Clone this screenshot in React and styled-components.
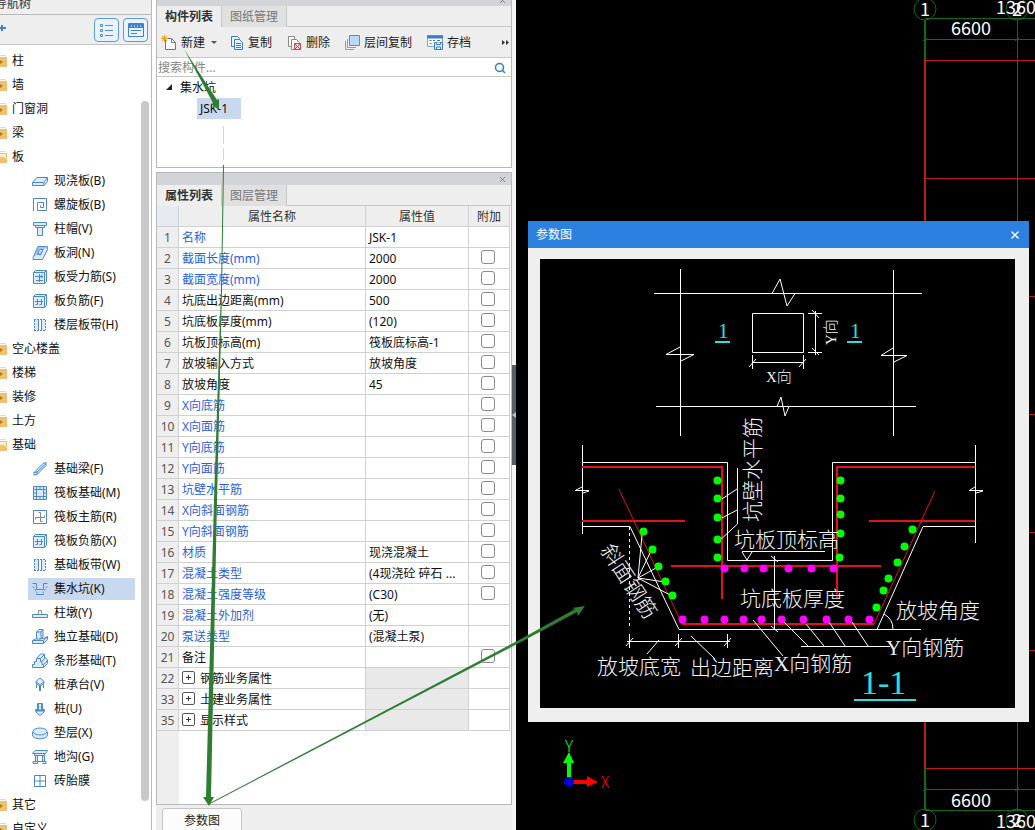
import React from 'react'
import styled, {createGlobalStyle} from 'styled-components'
import {Search, X} from 'lucide-react'

const GlobalStyle = createGlobalStyle`
  * {
    box-sizing: border-box;
  }

  body {
    margin: 0;
    overflow: hidden;
    background: #fff;
    color: #111;
    font-family: 'Noto Sans', 'Noto Sans CJK SC', sans-serif;
    font-size: 12px;
    line-height: 16px;
  }

  button,
  input {
    font: inherit;
    color: inherit;
    margin: 0;
    padding: 0;
    border: 0;
    background: none;
  }
`

const treeIcons = {
  slab: (
    <>
      <path d="M.5 9.500 5 4.500h10.500l-3.500 5zM.5 9.500v3H12v-3M12 12.500l3.500-4v-4" />
    </>
  ),
  spiral: (
    <>
      <path className="bare" d="M1.500 14V1.500h13v12h-9v-8h6v5h-3v-2" />
    </>
  ),
  cap: (
    <>
      <path d="M1.500 1.500h13v3h-13zM3.500 4.500h9v2h-9zM5.500 6.500h5v8h-5z" />
    </>
  ),
  hole: (
    <>
      <path className="deep" d="M6 1.500h9L10 12.500H1z" />
      <path d="M7.500 4.500h3.500l-2 5H5.500zM1 12.500v2h9.500l5-10v-3" />
    </>
  ),
  rebar: (
    <>
      <path d="M1.500 3.500h11v11h-11zM1.500 3.500l2-2h11v11l-2 2M12.500 3.500l2-2" />
      <path d="M3 7.500h7M4 11.500h7M7.500 5v8M9 6l2 1.500L9 9" />
    </>
  ),
  negative: (
    <>
      <path d="M1.500 3.500h11v11h-11zM1.500 3.500l2-2h11v11l-2 2M12.500 3.500l2-2" />
      <path className="bare" d="M5.500 6v5.500h-2M9.500 6v5.500h-2M3 8.500h8" />
    </>
  ),
  strip: (
    <>
      <path className="pale" d="M2 3h4v10H2zM10 3h4v10h-4z" />
      <path d="M6.500 3v10M9.500 3v10" />
      <path className="bare" strokeDasharray="2 1" d="M2 2.500h12M2 13.500h12M2.500 3v10M13.500 3v10" />
    </>
  ),
  beam: (
    <>
      <path d="M2 11.500 11 2.500l3-1v3L5 13.500l-3 .5zM2 11.500l3-.5v2.500M5 11l9-8.500" />
    </>
  ),
  raft: (
    <>
      <path d="M1.500 1.500h13v13h-13zM4.500 4.500h7v7h-7z" />
      <path d="M1.500 4.500h13M1.500 11.500h13M4.500 1.500v13M11.500 1.500v13M8 1.500v3M8 11.500v3M1.500 8h3M11.500 8h3" />
    </>
  ),
  mainbar: (
    <>
      <path className="bare" d="M1.500 1.500h13v13h-13z" />
      <path className="grey" d="M8.500 3.500v9M3.500 8.500h9M8.500 3.500h-2M8.500 12.500h2M3.500 8.500v2M12.500 8.500v-2" />
    </>
  ),
  pit: (
    <>
      <path className="bare" d="M.5 2.500h4v6h7v-6h4" />
      <path className="bare" strokeDasharray="2 1" d="M1 5.500l5 8h4l5-8" />
      <path className="bare" d="M4 13.500h8" />
    </>
  ),
  pier: (
    <>
      <path d="M.5 9.500h15v3H.5z" />
      <path className="grey" d="M5.500 9.500l1-2v-2h3v2l1 2" />
    </>
  ),
  footing: (
    <>
      <path d="M.5 11.500l4-2h7l4-2v3l-4 4H.5zM.5 11.500h11v3M11.500 11.500l4-4" />
      <path d="M4.500 3 7 .5h4V8L9 10H4.500zM4.500 3H9v7M9 3l2-2.500" />
    </>
  ),
  stepfoot: (
    <>
      <path d="M.5 14.500v-3h2v-3h2v-3L8.500 1h4v3.500h1L15.500 7v3.500l-4 4z" />
      <path className="bare" d="M4.500 5.500h4v3h1.500v3h1.500v3M8.500 5.500l4-4M10 8.500l3-4M11.500 11.500l4-4" />
    </>
  ),
  pilecap: (
    <>
      <path d="m8 1 4 3.500v2L8 9 4 6.500v-2zM4 4.500l4 3 4-3" />
      <path d="M4.500 7v4M11.500 7v4M7.500 8.500V14M8.500 8.500V14" />
    </>
  ),
  pile: (
    <>
      <path d="M5.500 2.500h5v6h2v2L8 14.500l-4.500-4v-2h2z" />
      <path className="bare" d="M6 3v7M10 3v7M4 9.500h8" strokeWidth="2" />
    </>
  ),
  cushion: (
    <>
      <path d="M.5 7v3c0 5 15 5 15 0V7" />
      <ellipse cx="8" cy="6.500" rx="7" ry="3.500" />
    </>
  ),
  trench: (
    <>
      <path d="M.5 4.500 3 1.500h12.500l-2 3zM2.500 4.500h10v2h-10zM3.500 6.500v6h2v-6M10.500 6.500v6h2v-6M1 12.500h4.500v2H1zM10.500 12.500H14v2h-3.500M5.500 12.500h5" />
    </>
  ),
  brick: (
    <>
      <path className="bare" d="M2.500 2.500h11v11h-11zM2.500 8h11M8 2.500v11" />
    </>
  ),
}

const navTree = [
  {name: '柱'},
  {name: '墙'},
  {name: '门窗洞'},
  {name: '梁'},
  {
    name: '板',
    children: [
      ['slab', '现浇板(B)'],
      ['spiral', '螺旋板(B)'],
      ['cap', '柱帽(V)'],
      ['hole', '板洞(N)'],
      ['rebar', '板受力筋(S)'],
      ['negative', '板负筋(F)'],
      ['strip', '楼层板带(H)'],
    ],
  },
  {name: '空心楼盖'},
  {name: '楼梯'},
  {name: '装修'},
  {name: '土方'},
  {
    name: '基础',
    children: [
      ['beam', '基础梁(F)'],
      ['raft', '筏板基础(M)'],
      ['mainbar', '筏板主筋(R)'],
      ['negative', '筏板负筋(X)'],
      ['strip', '基础板带(W)'],
      ['pit', '集水坑(K)'],
      ['pier', '柱墩(Y)'],
      ['footing', '独立基础(D)'],
      ['stepfoot', '条形基础(T)'],
      ['pilecap', '桩承台(V)'],
      ['pile', '桩(U)'],
      ['cushion', '垫层(X)'],
      ['trench', '地沟(G)'],
      ['brick', '砖胎膜'],
    ],
  },
  {name: '其它'},
  {name: '自定义'},
]

const properties = [
  {no: 1, name: '名称', value: 'JSK-1', link: true},
  {no: 2, name: '截面长度(mm)', value: '2000', link: true, check: true},
  {no: 3, name: '截面宽度(mm)', value: '2000', link: true, check: true},
  {no: 4, name: '坑底出边距离(mm)', value: '500', check: true},
  {no: 5, name: '坑底板厚度(mm)', value: '(120)', check: true},
  {no: 6, name: '坑板顶标高(m)', value: '筏板底标高-1', check: true},
  {no: 7, name: '放坡输入方式', value: '放坡角度', check: true},
  {no: 8, name: '放坡角度', value: '45', check: true},
  {no: 9, name: 'X向底筋', link: true, check: true},
  {no: 10, name: 'X向面筋', link: true, check: true},
  {no: 11, name: 'Y向底筋', link: true, check: true},
  {no: 12, name: 'Y向面筋', link: true, check: true},
  {no: 13, name: '坑壁水平筋', link: true, check: true},
  {no: 14, name: 'X向斜面钢筋', link: true, check: true},
  {no: 15, name: 'Y向斜面钢筋', link: true, check: true},
  {no: 16, name: '材质', value: '现浇混凝土', link: true, check: true},
  {no: 17, name: '混凝土类型', value: '(4现浇砼 碎石 ...', link: true, check: true},
  {no: 18, name: '混凝土强度等级', value: '(C30)', link: true, check: true},
  {no: 19, name: '混凝土外加剂', value: '(无)', link: true},
  {no: 20, name: '泵送类型', value: '(混凝土泵)', link: true},
  {no: 21, name: '备注', check: true},
  {no: 22, name: '钢筋业务属性', group: true},
  {no: 33, name: '土建业务属性', group: true},
  {no: 35, name: '显示样式', group: true},
]

function FolderIcon({open}) {
  return (
    <svg width="7" height="12" viewBox="0 0 7 12">
      <path d="M0 0h6v1H0z" fill="#f5d9a4" />
      <path d="M0 2h7v10H0z" fill="#efc070" />
      {open ? (
        <path d="M0 3h6v5L4 6H0z" fill="#fdf0cf" />
      ) : (
        <path d="M0 5l3 2-3 2z" fill="#b9781f" />
      )}
    </svg>
  )
}

function Sidebar() {
  return (
    <SidebarStyles>
      <h2>导航树</h2>
      <div className="tools">
        <button className="add" aria-label="添加">
          <svg width="6" height="8" viewBox="0 0 6 8">
            <path d="M0 4h6M2 1v6" stroke="#3f83cc" strokeWidth="2" />
          </svg>
        </button>
        <ViewButton aria-label="列表视图">
          <svg width="14" height="14" viewBox="0 0 14 14" fill="none" stroke="#4a8fd8">
            <path d="M5 2.500h8M5 7.500h8M5 12.500h8" />
            <path d="M.5 1.500h2v2h-2zM.5 6.500h2v2h-2zM.5 11.500h2v2h-2z" />
          </svg>
        </ViewButton>
        <ViewButton aria-label="图标视图">
          <svg width="16" height="14" viewBox="0 0 16 14" fill="none" stroke="#3f83cc">
            <path d="M.5.500h15v13H.5z" />
            <path d="M1 3h14" strokeWidth="4" />
            <path d="M3 3h1M6 3h1M9 3h1M12 3h1" stroke="#fff" />
            <path d="M3 7.500h10M3 10.500h6" />
          </svg>
        </ViewButton>
      </div>
      <div className="body">
        <nav>
          {navTree.map(group => (
            <React.Fragment key={group.name}>
              <GroupRow>
                <FolderIcon open={Boolean(group.children)} />
                {group.name}
              </GroupRow>
              {group.children &&
                group.children.map(([icon, label]) => (
                  <LeafRow key={label} $active={label === '集水坑(K)'}>
                    <svg width="16" height="16" viewBox="0 0 16 16">
                      {treeIcons[icon]}
                    </svg>
                    {label}
                  </LeafRow>
                ))}
            </React.Fragment>
          ))}
        </nav>
        <div className="scrollbar" />
      </div>
    </SidebarStyles>
  )
}

function ComponentPanel() {
  return (
    <Panel $height="175px">
      <PanelBar>
        <button aria-label="关闭构件列表">
          <X size={9} />
        </button>
      </PanelBar>
      <Tabs>
        <Tab $active>构件列表</Tab>
        <Tab>图纸管理</Tab>
      </Tabs>
      <Toolbar>
        <ToolButton>
          <svg width="16" height="16" viewBox="0 0 16 16" fill="none">
            <path d="M4.500 3.500h6l4 4v7h-10z" fill="#fff" stroke="#777" />
            <path d="M10.500 3.500v4h4" stroke="#777" />
            <path d="M3.500 0v7M0 3.500h7M1 1l5 5M6 1 1 6" stroke="#f0a030" />
          </svg>
          新建
          <svg className="caret" width="6" height="4" viewBox="0 0 6 4">
            <path d="M0 0h6L3 3z" fill="#555" />
          </svg>
        </ToolButton>
        <ToolButton>
          <svg width="14" height="16" viewBox="0 0 14 16" fill="#e8f2fd" stroke="#3b7cc4">
            <path d="M1.500 1.500h6l2 2v8h-8z" />
            <path d="M4.500 4.500h5l3 3v7h-8z" />
            <path d="M6 8.500h5M6 10.500h5M6 12.500h5" />
          </svg>
          复制
        </ToolButton>
        <ToolButton>
          <svg width="15" height="16" viewBox="0 0 15 16" fill="#fff" stroke="#888">
            <path d="M1.500 1.500h6v10h-6z" />
            <path d="M4.500 4.500h5l3 3v7h-8z" />
            <path d="M7.500 8.500h6v6h-6z" fill="#fbdcdc" stroke="#d04545" />
            <path d="m8 9 5 5M13 9l-5 5" stroke="#d04545" />
          </svg>
          删除
        </ToolButton>
        <ToolButton>
          <svg width="15" height="16" viewBox="0 0 15 16" fill="none">
            <path d="M.5 6v8.500H9" stroke="#e08a35" />
            <path d="M2.500 4v8.500H11" stroke="#e08a35" />
            <path d="M4.500.500h10v10h-10z" fill="#b9d9fb" stroke="#4a8fe0" />
          </svg>
          层间复制
        </ToolButton>
        <ToolButton>
          <svg width="16" height="16" viewBox="0 0 16 16" fill="#fff" stroke="#3b7cc4">
            <path d="M.5.500h15v11H.5z" stroke="#7fa8d4" />
            <path d="M0 2h16" strokeWidth="3" />
            <path d="M2.500 5.500h2M6 5.500h2M10 5.500h3M2.500 8.500h2" />
            <path d="M7.500 7.500h8v7h-8z" fill="#d8e8fb" />
            <path d="M9.500 7.500v2h4v-2M9.500 14v-2h4v2" />
          </svg>
          存档
        </ToolButton>
        <button className="more" aria-label="更多">
          <svg width="8" height="5" viewBox="0 0 8 5">
            <path d="M0 0l3 2.500L0 5zM4 0l3 2.500L4 5z" fill="#333" />
          </svg>
        </button>
      </Toolbar>
      <SearchBox>
        <input aria-label="搜索构件" placeholder="搜索构件..." />
        <Search size={12} color="#2c7fb8" strokeWidth={3} />
      </SearchBox>
      <ComponentTree>
        <li>
          <svg width="7" height="7" viewBox="0 0 7 7">
            <path d="M6 0v6H0z" fill="#222" />
          </svg>
          集水坑
        </li>
        <li className="selected">JSK-1</li>
      </ComponentTree>
    </Panel>
  )
}

function PropertyPanel() {
  return (
    <Panel $grow>
      <PanelBar>
        <button aria-label="关闭属性列表">
          <X size={9} />
        </button>
      </PanelBar>
      <Tabs>
        <Tab $active>属性列表</Tab>
        <Tab>图层管理</Tab>
      </Tabs>
      <div className="sheet">
        <PropertyTable>
          <colgroup>
            <col style={{width: 22}} />
            <col />
            <col style={{width: 103}} />
            <col style={{width: 41}} />
          </colgroup>
          <thead>
            <tr>
              <th />
              <th>属性名称</th>
              <th>属性值</th>
              <th>附加</th>
            </tr>
          </thead>
          <tbody>
            {properties.map(row => (
              <tr key={row.no}>
                <td className="no">{row.no}</td>
                <NameCell $link={row.link}>
                  {row.group && <button aria-label={`展开${row.name}`} />}
                  {row.name}
                </NameCell>
                <ValueCell $disabled={row.group}>{row.value}</ValueCell>
                <td className="extra">
                  {row.check && <input type="checkbox" aria-label={row.name} />}
                </td>
              </tr>
            ))}
          </tbody>
        </PropertyTable>
      </div>
    </Panel>
  )
}

function AxisGrid() {
  const rows = [60, 178, 296, 414, 532, 650, 768]
  return (
    <svg className="grid" width="100%" height="100%">
      <g transform="translate(-516 0)" fill="none">
        <g stroke="#c01818">
          {rows.map(y => (
            <path key={y} d={`M925 ${y + 0.5}H2400`} />
          ))}
          <path d="M925 60V768" strokeWidth="2" />
          <path d="M1017.500 60V768" />
        </g>
        <g stroke="#0f6b16">
          <path d="M925 18.500H2400M925 39.500H2400M925 789.500H2400M925 810.500H2400" />
          <path d="M925 20V60M925 768V810" strokeWidth="2" />
          <path d="M1017.500 20V60M1017.500 768V810" />
          <path d="M923 41l4-3M1015 41l4-3M923 791l4-3M1015 791l4-3" />
          <circle cx="925" cy="9" r="11" />
          <circle cx="1017" cy="9" r="11" />
          <circle cx="925" cy="820" r="11" />
          <circle cx="1017" cy="820" r="11" />
        </g>
        <g className="axis-text">
          <text x="925" y="16">1</text>
          <text x="1017" y="16">2</text>
          <text x="971" y="35">6600</text>
          <text x="1021" y="14">13600</text>
          <text x="971" y="807">6600</text>
          <text x="925" y="827">1</text>
          <text x="1017" y="827">2</text>
          <text x="1021" y="828">13600</text>
        </g>
        <path d="M567 781v-18h-4l6-11 5 11h-3v18z" fill="#00ff00" />
        <path d="M572 780h15v-4l11 6-11 5v-3h-15z" fill="#ff0000" />
        <circle cx="569" cy="782" r="5" fill="#0000d0" />
        <g className="ucs-text">
          <text x="569" y="752" fill="#00ff00">Y</text>
          <text x="605" y="788" fill="#ff0000">X</text>
        </g>
      </g>
    </svg>
  )
}

const greenBars = [
  [717, 480], [717, 498], [717, 517], [717, 539], [717, 557],
  [840, 480], [840, 498], [840, 514], [840, 533], [839, 557],
  [643, 531], [652, 549], [658, 566], [665, 581], [672, 595],
  [912, 529], [904, 546], [897, 562], [888, 578], [883, 590], [876, 607],
]

const pinkBars = [
  [724, 568], [744, 568], [763, 568], [788, 568], [811, 568], [833, 568],
  [682, 619], [704, 619], [724, 619], [743, 619], [761, 619],
  [781, 619], [803, 619], [826, 619], [848, 619], [869, 619],
]

function PitDrawing() {
  return (
    <DrawingStyles viewBox="540 259 475 449">
      {/* plan */}
      <g className="line">
        <path d="M680.500 269V436M893.500 270V436" />
        <path d="M654 293.500H772L780 279 787 306 795 293.500H922" />
        <path d="M772 293.500H795" />
        <path d="M656 406.500H777L781 397 785 416 789 406.500H916" />
        <path d="M777 406.500H789" />
        <path d="M680 347 666 354.500H694L681 361" />
        <path d="M893 348 881 355.500H907L894 362" />
        <path d="M752.500 313.500h51v39h-51z" />
        <path d="M815.500 311V355M808 313.500h14M808 352.500h14M812 310l7 8M812 348l7 7" />
        <path d="M752 362.500H804M752.500 355v14M803.500 355v14M749 367l7-8M799 367l7-8" />
      </g>

      {/* section outline */}
      <g className="line">
        <path d="M582.500 445V534M575 490.500H589M576 490l6-3M583 493l6-2" />
        <path d="M975.500 445V543M969 490.500H983M970 490l5-3M976 493l7-2" />
        <path d="M582 462.500H727.500V560.500H832.500V462.500H975" />
        <path d="M582 526.500H630L679 629.500H921M877 629.500 923 526.500H975" />
        <path d="M629.500 527V629" strokeDasharray="3 3" />
      </g>
      <g className="rebar">
        <path d="M582 467H722V599M975 467H837V598" />
        <path d="M582 521H685M869 521H975M671 566H881M682 624H874" />
        <path className="thin" d="M619 489 682 624M874 624 935 491" />
      </g>

      {/* leaders and dimensions */}
      <g className="line">
        <path d="M737.500 468V524L719 541M737 489 722 499M737 510 722 518" />
        <path d="M638 578 642 535M638 578 650 553M638 578 656 568M638 578 665 582M638 578 670 595" />
        <path d="M742 551.500H825M742 552l5 8 5-8" />
        <path d="M774.500 556V629M771 556l7 6M771 626l7 6" />
        <path d="M627 641.500H730M629.500 634v14M678.500 634v14M727.500 634v14" />
        <path d="M626 646l7-8M675 646l7-8M724 646l7-8" />
        <path d="M659 640 647 654M691 636 715 659M753 620 783 656" />
        <path d="M801 646.500H890M783 621 808 646M806 624 824 646M829 622 845 646M852 622 868 646" />
        <path d="M884 614Q893 619 893 629" />
      </g>
      {greenBars.map(([x, y]) => (
        <circle key={`${x}-${y}`} cx={x + 0.5} cy={y + 0.5} r="4" fill="#00ff00" />
      ))}
      {pinkBars.map(([x, y]) => (
        <circle key={`${x}-${y}`} cx={x + 0.5} cy={y + 0.5} r="4" fill="#ff00ff" />
      ))}

      <g className="small">
        <text x="766" y="382">X向</text>
        <text transform="translate(836 345) rotate(-90)">Y向</text>
      </g>
      <g className="label">
        <text transform="translate(760 522) rotate(-90)">坑壁水平筋</text>
        <text transform="translate(600 550) rotate(57)">斜面钢筋</text>
        <text x="734" y="547">坑板顶标高</text>
        <text x="740" y="606">坑底板厚度</text>
        <text x="597" y="674">放坡底宽</text>
        <text x="690" y="675">出边距离</text>
        <text x="774" y="671">X向钢筋</text>
        <text x="886" y="655">Y向钢筋</text>
        <text x="896" y="618">放坡角度</text>
      </g>
      <g className="mark">
        <text x="718" y="338">1</text>
        <text x="850" y="338">1</text>
        <path d="M715 341h15v2h-15zM847 341h15v2h-15zM854 699h62v2h-62z" />
        <text className="title" x="861" y="694">1-1</text>
      </g>
    </DrawingStyles>
  )
}

function ParameterDialog() {
  return (
    <DialogStyles role="dialog" aria-label="参数图">
      <header>
        参数图
        <button aria-label="关闭">
          <X size={12} strokeWidth={3} />
        </button>
      </header>
      <div className="content">
        <PitDrawing />
      </div>
    </DialogStyles>
  )
}

export default function App() {
  return (
    <AppStyles>
      <GlobalStyle />
      <Sidebar />
      <Middle>
        <ComponentPanel />
        <PropertyPanel />
        <footer>
          <button>参数图</button>
        </footer>
      </Middle>
      <Splitter>
        <button aria-label="收起面板">
          <svg width="4" height="6" viewBox="0 0 4 6">
            <path d="M4 0v6L0 3z" fill="#b8c0c8" />
          </svg>
        </button>
      </Splitter>
      <Canvas>
        <AxisGrid />
        <ParameterDialog />
      </Canvas>
      <Arrows width="100%" height="100%">
        <path d="M184 49 217 100 219 99 219 110 211 104 213 103z" />
        <path d="M223 165h1L222 290 217 500 211 797h3l-5 9-6-9h3L214 500 221 290z" />
        <path d="M208 804 519 640 575 609 572 608 585 606 578 616 577 612 521 642 208 805z" />
        <path className="faint" d="M223.500 126v18M223.500 148v12" />
      </Arrows>
    </AppStyles>
  )
}

const AppStyles = styled.div`
  position: relative;
  display: flex;
  height: 100vh;
  overflow: hidden;
`

const SidebarStyles = styled.aside`
  display: flex;
  flex-direction: column;
  flex: 0 0 152px;
  overflow: hidden;
  border-right: 1px solid #b9b9b9;

  h2 {
    flex: none;
    height: 15px;
    margin: 0;
    text-indent: -5px;
    font-size: 12px;
    font-weight: 500;
    line-height: 8px;
    color: #555;
    background: #eee;
    border-bottom: 1px solid #b9b9b9;
  }

  .tools {
    display: flex;
    flex: none;
    align-items: center;
    gap: 4px;
    height: 30px;
    padding-right: 3px;
    background: #eee;
    border-bottom: 1px solid #c4c4c4;
  }

  .add {
    display: flex;
    margin-right: auto;
    padding-bottom: 4px;
  }

  .body {
    display: flex;
    flex: 1;
    min-height: 0;
  }

  nav {
    display: flex;
    flex-direction: column;
    flex: 1;
    padding-top: 4px;
  }

  .scrollbar {
    width: 8px;
    height: 700px;
    margin: 56px 2px 0 0;
    border-radius: 4px;
    background: #c9c9c9;
  }
`

const ViewButton = styled.button`
  display: flex;
  align-items: center;
  justify-content: center;
  width: 25px;
  height: 24px;
  border: 1px solid #5b9bdc;
  border-radius: 4px;
  background: #e9f3fd;
`

const GroupRow = styled.div`
  display: flex;
  flex: none;
  align-items: center;
  gap: 5px;
  height: 24px;
  white-space: nowrap;
`

const LeafRow = styled.div`
  display: flex;
  flex: none;
  align-items: center;
  gap: 6px;
  height: 22px;
  margin: 1px 6px 1px 28px;
  padding-left: 4px;
  white-space: nowrap;
  background: ${props => (props.$active ? '#c8d8ee' : 'transparent')};

  svg {
    fill: #dcebfb;
    stroke: #4d8acb;
  }

  .bare {
    fill: none;
  }

  .deep {
    fill: #9fc3ee;
  }

  .pale {
    stroke: none;
  }

  .grey {
    fill: none;
    stroke: #808a78;
  }
`

const Middle = styled.main`
  display: flex;
  flex-direction: column;
  flex: 0 0 356px;
  margin: -7px 0 0 4px;

  footer {
    flex: 0 0 25px;
    overflow: hidden;
    padding: 3px 6px 0;
    background: #eee;
  }

  footer button {
    width: 80px;
    height: 26px;
    border: 1px solid #c4c4c4;
    border-radius: 3px;
    background: #fcfcfc;
    color: #222;
  }
`

const Panel = styled.section`
  display: flex;
  flex-direction: column;
  flex: ${props => (props.$grow ? '1' : `0 0 ${props.$height}`)};
  min-height: 0;
  border: 1px solid #b6b8ba;
  background: #fff;

  & + & {
    margin-top: 4px;
  }

  .sheet {
    flex: 1;
    padding-right: 1px;
    background: linear-gradient(to right, #eee 22px, #fff 22px);
  }
`

const PanelBar = styled.div`
  display: flex;
  flex: none;
  align-items: center;
  justify-content: flex-end;
  height: 12px;
  padding-right: 4px;
  background: #d3d4d8;
  color: #666;

  button {
    display: flex;
  }
`

const Tabs = styled.div`
  display: flex;
  flex: none;
  height: 21px;
  background: #eee;
  box-shadow: inset 0 -1px #c6c8ca;
`

const Tab = styled.button`
  padding: 0 8px;
  border-right: 1px solid #c6c8ca;
  font-weight: ${props => (props.$active ? 700 : 400)};
  color: ${props => (props.$active ? '#333' : '#777')};
  background: ${props => (props.$active ? '#eee' : '#e0e0e0')};
`

const Toolbar = styled.div`
  display: flex;
  flex: none;
  align-items: center;
  gap: 15px;
  height: 31px;
  padding: 1px 1px 0 4px;
  background: #eee;
  border-bottom: 1px solid #c6c8ca;

  .more {
    margin-left: auto;
    display: flex;
  }
`

const ToolButton = styled.button`
  display: flex;
  align-items: center;
  gap: 4px;
  white-space: nowrap;
  color: #222;

  .caret {
    margin-left: 2px;
    margin-right: -2px;
  }
`

const SearchBox = styled.label`
  display: flex;
  flex: none;
  align-items: center;
  height: 19px;
  padding: 1px 5px 0 1px;
  border-bottom: 1px solid #c6c8ca;

  input {
    flex: 1;
    outline: none;
  }

  input::placeholder {
    color: #888;
    opacity: 1;
  }
`

const ComponentTree = styled.ul`
  margin: 0;
  padding: 0 0 0 9px;
  list-style: none;

  li {
    display: flex;
    align-items: center;
    gap: 7px;
    height: 21px;
  }

  .selected {
    width: 44px;
    margin-left: 31px;
    padding-left: 3px;
    background: #c8d8ee;
  }
`

const PropertyTable = styled.table`
  width: 100%;
  table-layout: fixed;
  border-collapse: separate;
  border-spacing: 0;

  th,
  td {
    height: 21px;
    padding: 2px 0 0;
    line-height: 16px;
    border-right: 1px solid #cfd1d3;
    border-bottom: 1px solid #cfd1d3;
    white-space: nowrap;
    overflow: hidden;
  }

  th {
    font-weight: 400;
    color: #333;
    background: #eee;
  }

  th:first-child {
    background: #e6ebf2;
  }

  .no {
    text-align: center;
    color: #555;
    background: #eee;
  }

  .extra {
    padding: 0 2px 0 0;
    text-align: center;
    line-height: 0;
    background: #fff;
  }

  .extra input {
    appearance: none;
    width: 14px;
    height: 14px;
    margin-bottom: 2px;
    vertical-align: middle;
    border: 1px solid #8a8a8a;
    border-radius: 3px;
    background: #fff;
  }
`

const NameCell = styled.td`
  padding-left: 3px !important;
  background: #fff;
  color: ${props => (props.$link ? '#2a5fe0' : '#111')};

  button {
    width: 13px;
    height: 13px;
    margin: 0 5px 3px 0;
    vertical-align: middle;
    border: 1px solid #555;
    border-radius: 2px;
    background: linear-gradient(#333, #333) center / 5px 1px no-repeat,
      linear-gradient(#333, #333) center / 1px 5px no-repeat;
  }
`

const ValueCell = styled.td`
  padding-left: 3px !important;
  background: ${props => (props.$disabled ? '#e9e9e9' : '#fff')};
`

const Splitter = styled.div`
  display: flex;
  align-items: center;
  flex: 0 0 4px;
  background: #f4f4f4;

  button {
    display: flex;
    align-items: center;
    width: 4px;
    height: 100px;
    background: #555e68;
  }
`

const Canvas = styled.div`
  position: relative;
  flex: 1;
  min-width: 0;
  overflow: hidden;
  background: #000;

  .grid {
    display: block;
  }

  .axis-text {
    font-family: 'Noto Sans CJK SC', sans-serif;
    font-size: 18px;
    text-anchor: middle;
    fill: #fff;
  }

  .ucs-text {
    font-family: 'Noto Sans CJK SC', sans-serif;
    font-size: 16px;
    font-weight: 300;
    text-anchor: middle;
  }
`

const DialogStyles = styled.section`
  position: absolute;
  top: 221px;
  left: 12px;
  right: 6px;
  background: #efefef;

  header {
    display: flex;
    align-items: center;
    justify-content: space-between;
    height: 27px;
    padding: 0 8px;
    color: #fff;
    background: #2b80e0;
  }

  header button {
    display: flex;
  }

  .content {
    padding: 11px 14px 14px 12px;
  }
`

const DrawingStyles = styled.svg`
  display: block;
  width: 100%;
  height: auto;
  background: #000;

  .line {
    fill: none;
    stroke: #fff;
  }

  .rebar {
    fill: none;
    stroke: #e01414;
    stroke-width: 2;
  }

  .thin {
    stroke-width: 1;
  }

  text {
    font-family: 'Liberation Serif', 'Noto Sans CJK SC', serif;
    font-weight: 300;
    fill: #f2f2f2;
  }

  .small text {
    font-size: 15px;
  }

  .label text {
    font-size: 21px;
  }

  .mark,
  .mark text {
    fill: #28e0e0;
    font-size: 21px;
  }

  .mark .title {
    font-size: 34px;
  }
`

const Arrows = styled.svg`
  position: absolute;
  inset: 0;
  pointer-events: none;
  fill: #2f7d32;

  .faint {
    stroke: #d4d8d4;
  }
`
